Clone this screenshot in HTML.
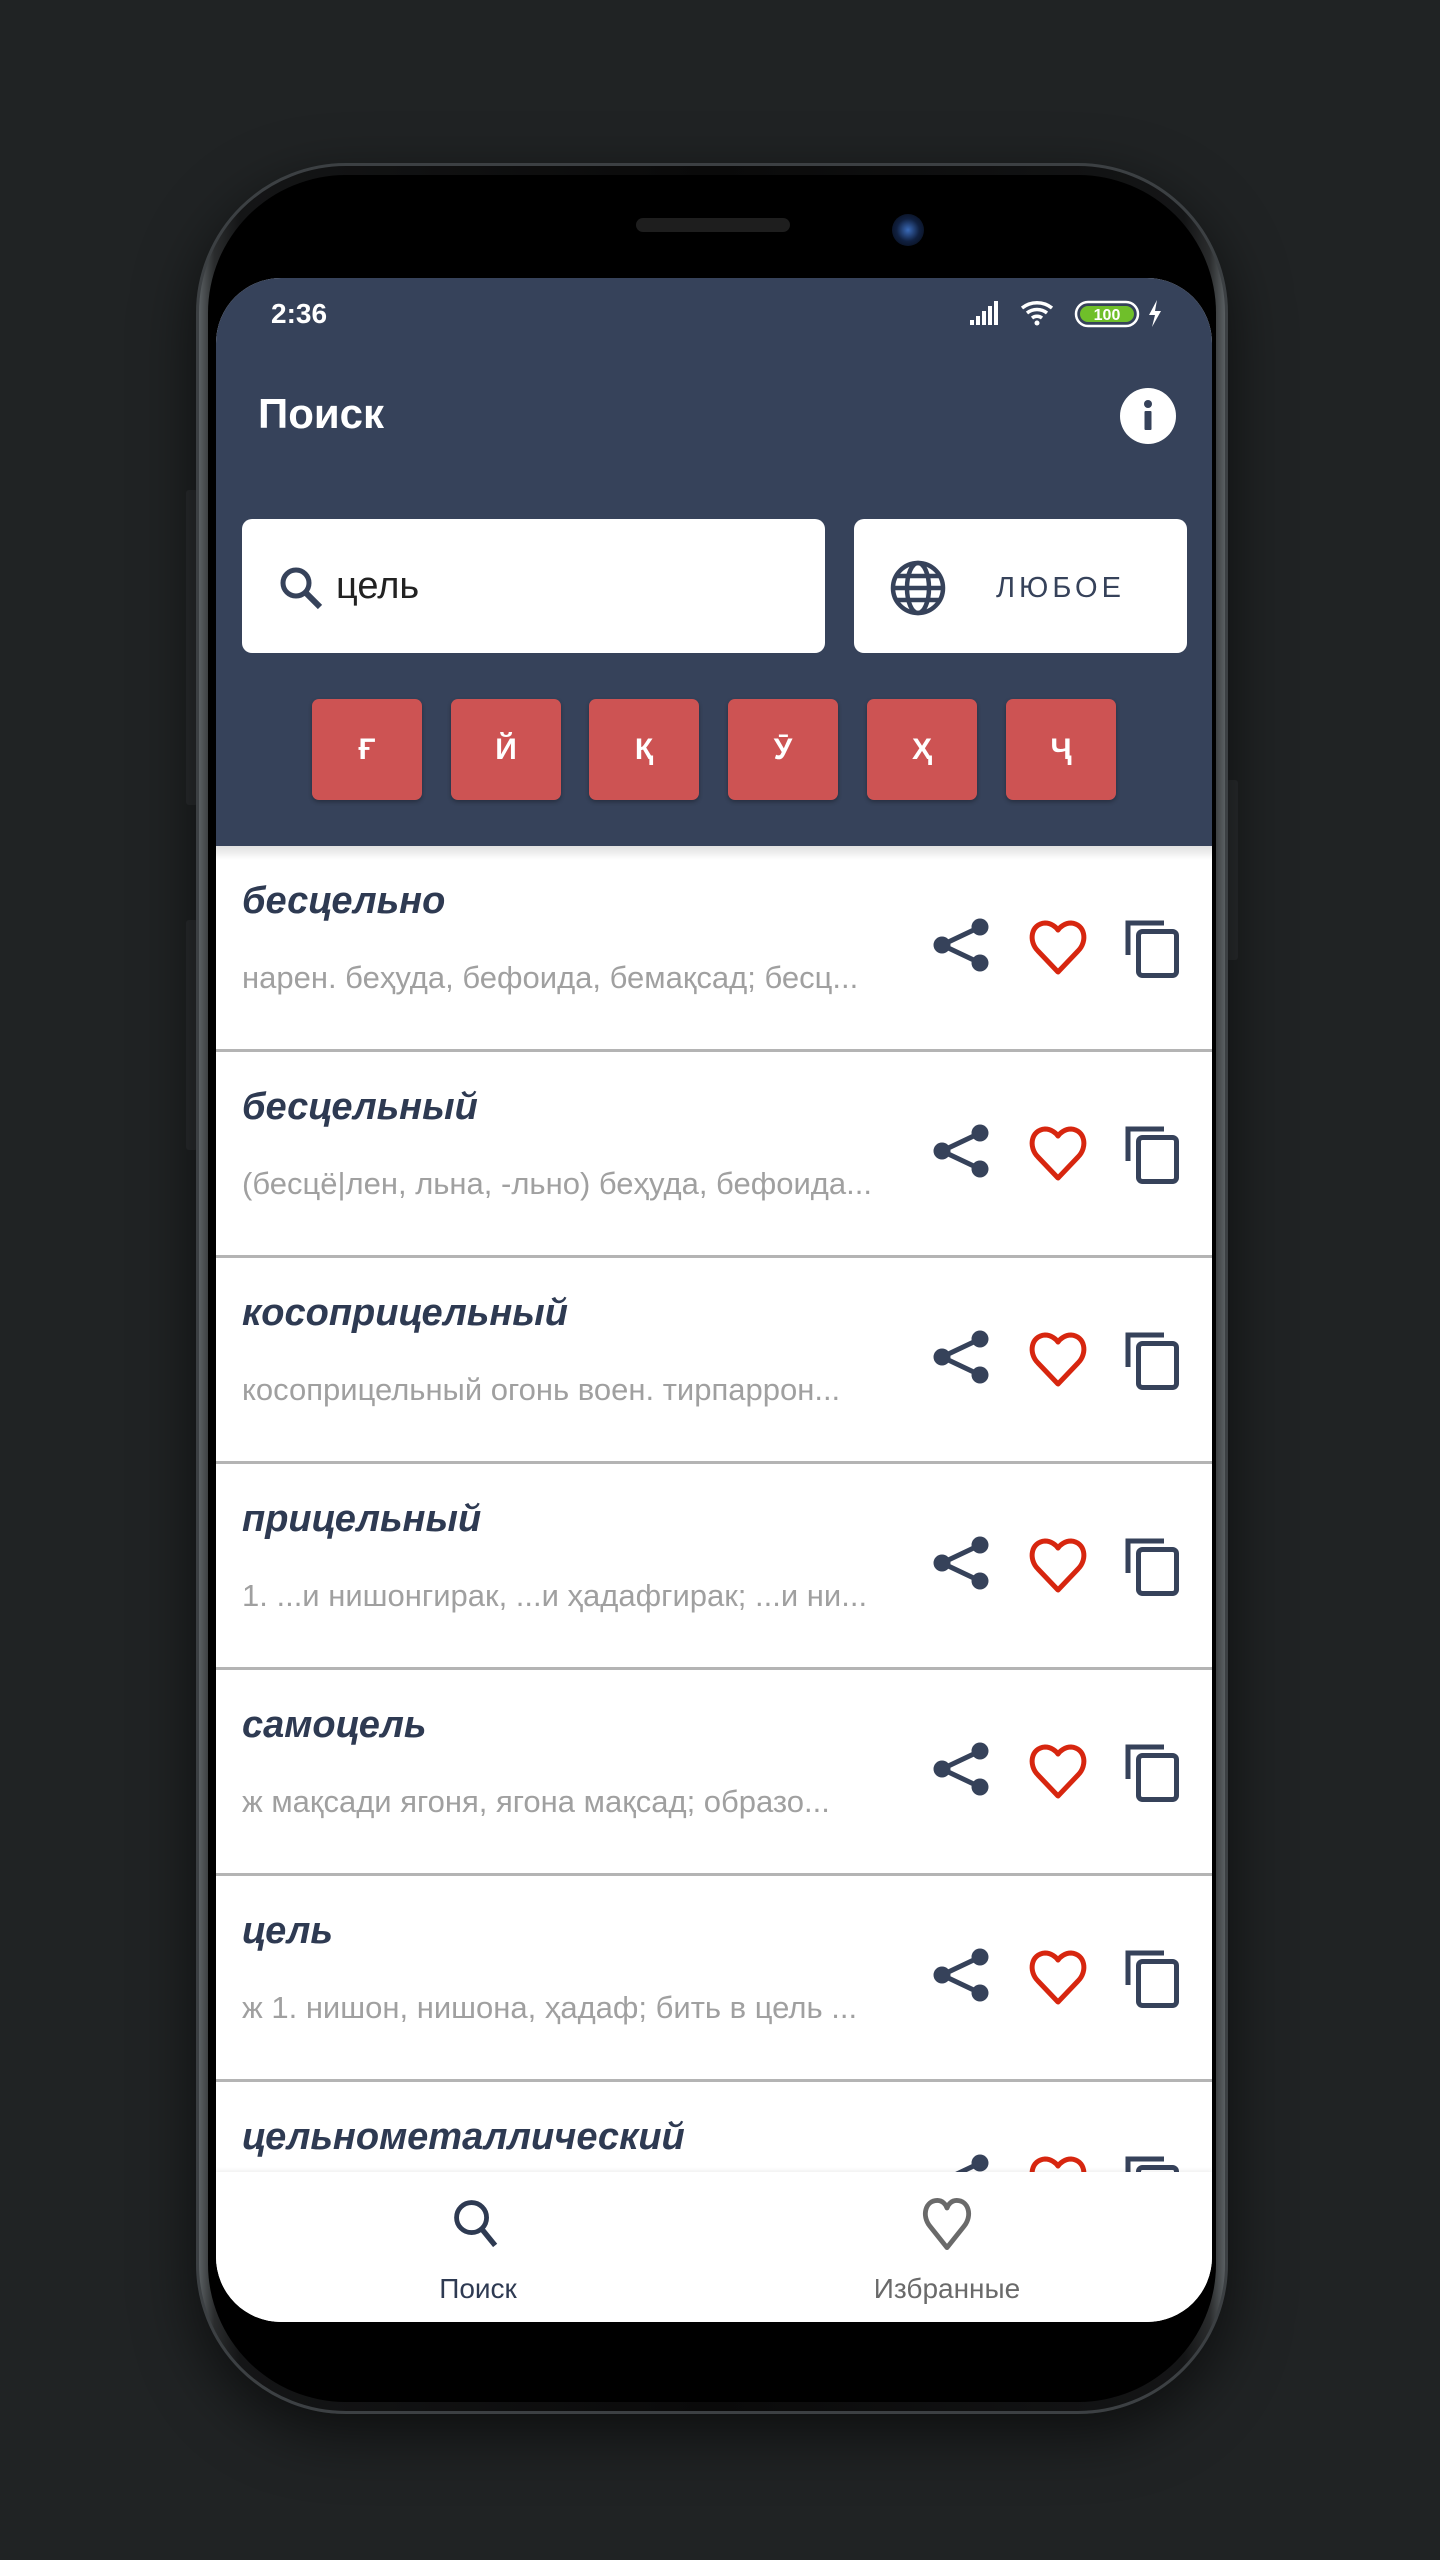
<!DOCTYPE html>
<html><head><meta charset="utf-8"><style>
*{margin:0;padding:0;box-sizing:border-box}
body{width:1440px;height:2560px;background:#202324;position:relative;overflow:hidden;font-family:"Liberation Sans","DejaVu Sans",sans-serif}
.abs{position:absolute}
.phone{left:196px;top:163px;width:1032px;height:2251px;border-radius:150px;background:linear-gradient(90deg,#5a5f62 0%,#2a2c2d 1.5%,#141516 4%,#0a0a0a 50%,#141516 96%,#2a2c2d 98.5%,#5a5f62 100%);box-shadow:0 20px 60px rgba(0,0,0,.6);border:3px solid #3c4043}
.inner{left:208px;top:175px;width:1008px;height:2227px;border-radius:138px;background:#000}
.screen{left:216px;top:278px;width:996px;height:2044px;border-radius:65px;overflow:hidden;background:#fff}
.hdr{left:0;top:0;width:996px;height:568px;background:#36425a}
.box{background:#fff;border-radius:10px}
.key{top:421px;width:110px;height:101px;background:#cd5353;border-radius:7px;color:#fff;font-size:30px;font-weight:bold;text-align:center;line-height:101px;box-shadow:0 2px 4px rgba(0,0,0,.3)}
.row{left:0;width:996px;height:206px;border-bottom:3px solid #b4b4b4;background:#fff}
.t{left:26px;top:34px;font-size:38px;font-weight:bold;font-style:italic;color:#2e3a52}
.s{left:26px;top:114px;font-size:31px;color:#a0a0a0;width:880px;white-space:nowrap}
</style></head><body>
<div class="abs" style="left:1226px;top:780px;width:12px;height:180px;background:#2a2d2f;border-radius:3px"></div>
<div class="abs" style="left:186px;top:490px;width:12px;height:315px;background:#2a2d2f;border-radius:3px"></div>
<div class="abs" style="left:186px;top:920px;width:12px;height:230px;background:#2a2d2f;border-radius:3px"></div>
<div class="abs phone"></div>
<div class="abs inner"></div>
<div class="abs" style="left:636px;top:218px;width:154px;height:14px;border-radius:7px;background:#1e1e1e"></div>
<div class="abs" style="left:892px;top:214px;width:32px;height:32px;border-radius:50%;background:radial-gradient(circle,#3a6ab8 0%,#102040 50%,#05080f 100%)"></div>
<div class="abs screen">
 <div class="abs hdr">
  <div class="abs" style="left:55px;top:20px;color:#fff;font-size:28px;font-weight:bold">2:36</div>
  <svg class="abs" style="left:750px;top:20px" width="240" height="30" viewBox="0 0 240 30">
   <g fill="#fff"><rect x="4" y="22" width="4" height="5"/><rect x="10" y="18" width="4" height="9"/><rect x="16" y="13" width="4" height="14"/><rect x="22" y="8" width="4" height="19"/><rect x="28" y="3" width="4" height="24"/></g>
   <path d="M56 10a24 24 0 0 1 30 0M61 15a16 16 0 0 1 20 0M66 20a8 8 0 0 1 10 0" stroke="#fff" stroke-width="3.5" fill="none"/><circle cx="71" cy="25" r="2.5" fill="#fff"/>
   <rect x="110" y="4" width="62" height="24" rx="12" fill="none" stroke="#fff" stroke-width="2.5"/>
   <rect x="114" y="8" width="54" height="16" rx="8" fill="#6fbf2a"/>
   <text x="141" y="22" font-size="16" font-weight="bold" text-anchor="middle" fill="#fff" font-family="Liberation Sans">100</text>
   <path d="M191 2l-8 15h6l-3 12 9-16h-6z" fill="#fff"/>
  </svg>
  <div class="abs" style="left:42px;top:112px;color:#fff;font-size:42px;font-weight:bold">Поиск</div>
  <svg class="abs" style="left:904px;top:110px" width="56" height="56"><circle cx="28" cy="28" r="28" fill="#fff"/><circle cx="28" cy="16" r="4" fill="#36425a"/><rect x="24.5" y="23" width="7" height="19" rx="1" fill="#36425a"/></svg>
  <div class="abs box" style="left:26px;top:241px;width:583px;height:134px"></div>
  <svg class="abs" style="left:60px;top:285px" width="54" height="54" viewBox="0 0 54 54"><circle cx="20" cy="20" r="13" stroke="#36425a" stroke-width="5" fill="none"/><path d="M30 30l14 14" stroke="#36425a" stroke-width="6"/></svg>
  <div class="abs" style="left:120px;top:287px;font-size:38px;color:#222">цель</div>
  <div class="abs box" style="left:638px;top:241px;width:333px;height:134px"></div>
  <svg class="abs" style="left:673px;top:281px" width="58" height="58" viewBox="0 0 58 58"><g stroke="#36425a" stroke-width="4.5" fill="none"><circle cx="29" cy="29" r="25"/><ellipse cx="29" cy="29" rx="11" ry="25"/><path d="M4 29h50M8 17h42M8 41h42"/></g></svg>
  <div class="abs" style="left:780px;top:294px;font-size:29px;color:#36425a;letter-spacing:4px">ЛЮБОЕ</div>
  <div class="abs key" style="left:96px">Ғ</div>
  <div class="abs key" style="left:235px">Й</div>
  <div class="abs key" style="left:373px">Қ</div>
  <div class="abs key" style="left:512px">Ӯ</div>
  <div class="abs key" style="left:651px">Ҳ</div>
  <div class="abs key" style="left:790px">Ҷ</div>
 </div>
 <div class="abs" style="left:0;top:568px;width:996px;height:1326px;overflow:hidden">
  <div class="abs" style="left:0;top:0;width:996px;height:14px;background:linear-gradient(rgba(0,0,0,.12),rgba(0,0,0,0));z-index:2"></div>
  <div class="abs row" style="top:0"><div class="abs t">бесцельно</div><div class="abs s">нарен. беҳуда, бефоида, бемақсад; бесц...</div></div>
  <div class="abs row" style="top:206px"><div class="abs t">бесцельный</div><div class="abs s">(бесцё|лен, льна, -льно) беҳуда, бефоида...</div></div>
  <div class="abs row" style="top:412px"><div class="abs t">косоприцельный</div><div class="abs s">косоприцельный огонь воен. тирпаррон...</div></div>
  <div class="abs row" style="top:618px"><div class="abs t">прицельный</div><div class="abs s">1. ...и нишонгирак, ...и ҳадафгирак; ...и ни...</div></div>
  <div class="abs row" style="top:824px"><div class="abs t">самоцель</div><div class="abs s">ж мақсади ягоня, ягона мақсад; образо...</div></div>
  <div class="abs row" style="top:1030px"><div class="abs t">цель</div><div class="abs s">ж 1. нишон, нишона, ҳадаф; бить в цель ...</div></div>
  <div class="abs row" style="top:1236px;border:0"><div class="abs t">цельнометаллический</div></div>
  <svg class="abs" style="left:0;top:0" width="996" height="1326">
   <defs><g id="ics">
    <g fill="#36425a"><circle cx="764" cy="81" r="8.5"/><circle cx="726" cy="99" r="8.5"/><circle cx="764" cy="117" r="8.5"/></g>
    <path d="M764 81L726 99L764 117" stroke="#36425a" stroke-width="5" fill="none"/>
    <path d="M842 126L822 105C812 95 815 78 829 77C835 77 840 81 842 84C844 81 849 77 855 77C869 78 872 95 862 105Z" stroke="#d7260f" stroke-width="5" fill="none" stroke-linejoin="round"/>
    <path d="M912 109V77H948" stroke="#36425a" stroke-width="5" fill="none"/>
    <rect x="922.5" y="85.5" width="38" height="44" rx="4" stroke="#36425a" stroke-width="5" fill="none"/>
   </g></defs>
   <use href="#ics" y="0"/><use href="#ics" y="206"/><use href="#ics" y="412"/><use href="#ics" y="618"/><use href="#ics" y="824"/><use href="#ics" y="1030"/><use href="#ics" y="1236"/>
  </svg>
 </div>
 <div class="abs" style="left:0;top:1894px;width:996px;height:150px;background:#fff;box-shadow:0 -2px 4px rgba(0,0,0,.06)">
  <svg class="abs" style="left:232px;top:22px" width="60" height="60" viewBox="0 0 56 56"><circle cx="22" cy="22" r="14" stroke="#2e3a52" stroke-width="4.5" fill="none"/><path d="M31 32l13 16" stroke="#2e3a52" stroke-width="5"/></svg>
  <div class="abs" style="left:202px;top:103px;width:120px;text-align:center;font-size:28px;color:#2e3a52;line-height:1">Поиск</div>
  <svg class="abs" style="left:701px;top:22px" width="60" height="60" viewBox="0 0 56 56"><path d="M28 50L12 30C4 20 8 6 19 6C24 6 27 10 28 13C29 10 32 6 37 6C48 6 52 20 44 30Z" stroke="#6a6a6a" stroke-width="4.5" fill="none" stroke-linejoin="round"/></svg>
  <div class="abs" style="left:630px;top:103px;width:202px;text-align:center;font-size:28px;color:#6a6a6a;line-height:1">Избранные</div>
 </div>
</div>
</body></html>
